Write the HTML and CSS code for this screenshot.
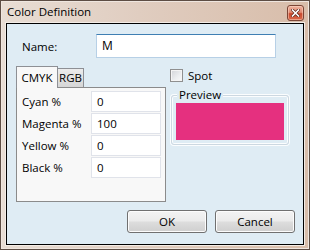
FILE: index.html
```html
<!DOCTYPE html>
<html>
<head>
<meta charset="utf-8">
<link rel="stylesheet" href="styles.css">
</head>
<body>
<div class="window">
  <div class="titlebar">
    <span class="title">Color Definition</span>
    <span class="close">
      <svg width="9" height="8" viewBox="0 0 9 8"><path d="M1.5 1 L7.5 7 M7.5 1 L1.5 7" stroke="#5a2418" stroke-width="3" stroke-linecap="square"/><path d="M1.5 1 L7.5 7 M7.5 1 L1.5 7" stroke="#fff" stroke-width="1.6" stroke-linecap="square"/></svg>
    </span>
  </div>
  <div class="client">
    <div class="name-row">
      <label class="name-label">Name:</label>
      <div class="name-input">M</div>
    </div>
    <div class="main">
      <div class="left">
        <div class="tabs">
          <div class="tab active">CMYK</div>
          <div class="tab">RGB</div>
        </div>
        <div class="panel">
          <div class="row"><span class="lbl">Cyan %</span><span class="field">0</span></div>
          <div class="row"><span class="lbl">Magenta %</span><span class="field">100</span></div>
          <div class="row"><span class="lbl">Yellow %</span><span class="field">0</span></div>
          <div class="row"><span class="lbl">Black %</span><span class="field">0</span></div>
        </div>
      </div>
      <div class="right">
        <div class="spot"><span class="check"></span><span>Spot</span></div>
        <div class="group">
          <span class="legend">Preview</span>
          <div class="swatch"></div>
        </div>
      </div>
    </div>
    <div class="buttons">
      <div class="btn">OK</div>
      <div class="btn">Cancel</div>
    </div>
  </div>
</div>
</body>
</html>
```

FILE: styles.css
```css
* { box-sizing: border-box; }
html, body { margin: 0; padding: 0; }
body {
  width: 310px;
  height: 250px;
  font-family: "Open Sans", "Noto Sans", sans-serif;
  font-size: 11.5px;
  color: #000;
}
.window {
  width: 310px;
  height: 250px;
  border: 1px solid #5d4d44;
  background: linear-gradient(to right, #e8ddd4 0%, #e0cdc0 45%, #d8bdaa 100%);
  display: flex;
  flex-direction: column;
  padding: 0 5px 4px 5px;
  box-shadow: inset 0 0 0 1px #efe6df;
}
.titlebar {
  height: 22px;
  display: flex;
  align-items: flex-start;
  justify-content: space-between;
}
.title {
  padding-left: 1px;
  margin-top: 3px;
  font-size: 11.5px;
  line-height: 16px;
  color: #000;
}
.close {
  margin-top: 4px;
  width: 17px;
  height: 16px;
  border: 1px solid #7b4536;
  border-radius: 3px;
  background: linear-gradient(to bottom, #eeb3a0 0%, #e08a72 45%, #c9482d 55%, #d96a4c 100%);
  box-shadow: inset 0 0 0 1px rgba(255,220,200,0.5);
  display: flex;
  align-items: center;
  justify-content: center;
}
.close svg { display: block; }
.client {
  flex: 1;
  border: 1px solid #000;
  background: #dfecf4;
  box-shadow: 0 0 0 1px #f3ece6;
  display: flex;
  flex-direction: column;
}
.name-row {
  display: flex;
  align-items: center;
  margin-top: 10px;
}
.name-label {
  width: 89px;
  padding-left: 15px;
}
.name-input {
  width: 180px;
  height: 24px;
  background: #fff;
  border: 1px solid #b7d0e6;
  border-top-color: #3f7fb3;
  padding-left: 5px;
  font-size: 12px;
  line-height: 22px;
}
.main {
  display: flex;
  margin-top: 8px;
}
.left {
  margin-left: 9px;
  width: 150px;
  display: flex;
  flex-direction: column;
}
.tabs {
  display: flex;
  align-items: flex-start;
  height: 21px;
}
.tab {
  position: relative;
  height: 19px;
  margin-top: 2px;
  margin-left: -1px;
  width: 27px;
  border: 1px solid #8e9095;
  border-bottom: none;
  background: linear-gradient(to bottom, #ececec, #d6d6d6);
  text-align: center;
  line-height: 17px;
}
.tab.active {
  margin-top: 0;
  margin-left: 0;
  width: 42px;
  height: 22px;
  background: #f8f8f8;
  z-index: 2;
  line-height: 21px;
}
.panel {
  height: 115px;
  border: 1px solid #8b8b8b;
  background: #f8f8f8;
  padding: 3px 4px 0 5px;
  display: flex;
  flex-direction: column;
  gap: 1px;
}
.row {
  display: flex;
  align-items: center;
  height: 21px;
}
.lbl {
  width: 69px;
}
.field {
  width: 70px;
  height: 21px;
  background: #fff;
  border: 1px solid #e0e3ea;
  padding-left: 5px;
  line-height: 19px;
}
.right {
  margin-left: 4px;
  display: flex;
  flex-direction: column;
}
.spot {
  margin-top: 3px;
  display: flex;
  align-items: center;
  gap: 5px;
  height: 13px;
}
.check {
  width: 13px;
  height: 13px;
  border: 1px solid #8f8f8f;
  background: linear-gradient(135deg, #d2d4d8 0%, #eceef0 60%, #fafafa 100%);
  box-shadow: inset 0 0 0 1px #f4f4f4;
}
.group {
  position: relative;
  margin-top: 13px;
  margin-left: 1px;
  width: 118px;
  height: 50px;
  border: 1px solid #ccd8e1;
  border-radius: 3px;
  box-shadow: 0 0 0 1px #fbfdfe, inset 0 0 0 1px #fbfdfe;
  padding: 7px 4px 4px 4px;
}
.legend {
  position: absolute;
  top: -9px;
  left: 5px;
  padding: 0 2px;
  background: #dfecf4;
  line-height: 16px;
}
.swatch {
  width: 108px;
  height: 37px;
  background: #e5307f;
}
.buttons {
  display: flex;
  justify-content: flex-end;
  gap: 8px;
  margin-top: 8px;
  padding-right: 8px;
}
.btn {
  width: 80px;
  height: 23px;
  border: 1px solid #707070;
  border-radius: 3px;
  background: linear-gradient(to bottom, #f3f3f3 0%, #ebebeb 48%, #dddddd 52%, #cfcfcf 100%);
  box-shadow: inset 0 0 0 1px #fcfcfc;
  text-align: center;
  line-height: 21px;
}
```
